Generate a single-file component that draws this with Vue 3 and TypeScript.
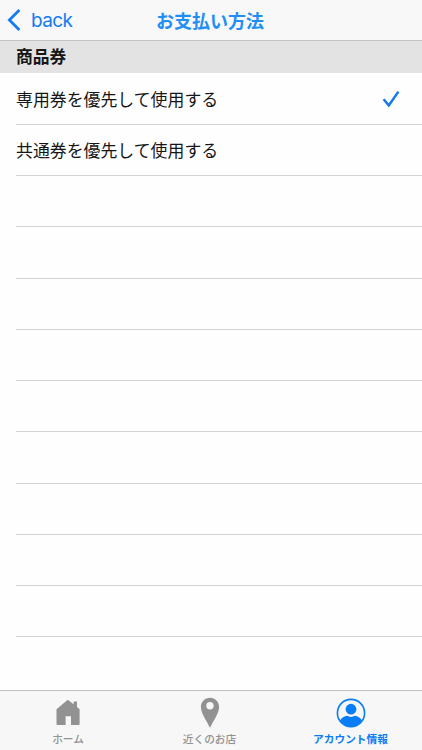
<script setup lang="ts">
import { ref } from 'vue'

const options: string[] = ['専用券を優先して使用する', '共通券を優先して使用する']
const selected = ref(0)
const emptyRows = 9
</script>

<template>
  <div class="screen">
    <header class="navbar">
      <button class="back" type="button">
        <svg width="14" height="24" viewBox="0 0 14 24"><path d="M12.4 2 2.4 12 12.4 22" fill="none" stroke="currentColor" stroke-width="2.8" /></svg>
        <span>back</span>
      </button>
      <h1 class="title">お支払い方法</h1>
      <span></span>
    </header>
    <h2 class="section">商品券</h2>
    <ul class="list">
      <li v-for="(option, i) in options" :key="option" class="row" @click="selected = i">
        <span class="label">{{ option }}</span>
        <svg v-if="selected === i" class="check" width="18" height="18" viewBox="0 0 18 18"><path d="M1.6 9.3 6.8 15.4 16.4 1.6" fill="none" stroke="currentColor" stroke-width="2.5" /></svg>
      </li>
      <li v-for="n in emptyRows" :key="n" class="row"></li>
    </ul>
    <nav class="tabbar">
      <div class="tab">
        <svg width="24" height="28" viewBox="0 0 24 28"><path d="M11.2 1.2Q12 .8 12.8 1.4L17.6 5.2V2.4H21V8L23.6 10.3V25Q23.6 26 22.6 26H15V17.2H9.6V26H1.5Q.5 26 .5 25V10.3Z" fill="currentColor" /></svg>
        <span>ホーム</span>
      </div>
      <div class="tab">
        <svg width="20" height="32" viewBox="0 0 20 32"><path fill-rule="evenodd" d="M10 .8C4.9.8.9 4.8.9 9.9.9 16 6.2 22.8 10 30.8 13.8 22.8 19.1 16 19.1 9.9 19.1 4.8 15.1.8 10 .8ZM10 5.1A3.7 3.7 0 1 1 10 12.5 3.7 3.7 0 0 1 10 5.1Z" fill="currentColor" /></svg>
        <span>近くのお店</span>
      </div>
      <div class="tab active">
        <svg width="30" height="30" viewBox="0 0 30 30">
          <defs><clipPath id="avatar"><circle cx="15" cy="15" r="13.2" /></clipPath></defs>
          <circle cx="15" cy="15" r="13.6" fill="none" stroke="currentColor" stroke-width="1.6" />
          <circle cx="15" cy="11.2" r="5.4" fill="currentColor" />
          <path clip-path="url(#avatar)" d="M3.6 23C5.5 19.4 8.5 18.3 11 17.8Q15 20 19 17.8C21.5 18.3 24.5 19.4 26.4 23L25 30H5Z" fill="currentColor" />
        </svg>
        <span>アカウント情報</span>
      </div>
    </nav>
  </div>
</template>

<style>
body { margin: 0; background: #fff; }
</style>

<style scoped>
.screen {
  width: 100%;
  height: 750px;
  display: flex;
  flex-direction: column;
  overflow: hidden;
  background: #fefefe;
  color: #161616;
  font-family: "Noto Sans CJK JP", sans-serif;
}
.navbar {
  box-sizing: border-box;
  flex: none;
  height: 41px;
  display: grid;
  grid-template-columns: 1fr auto 1fr;
  align-items: center;
  background: #f8f8f8;
  border-bottom: 1px solid #c3c3c3;
}
.back {
  display: flex;
  align-items: center;
  gap: 10px;
  margin: 0;
  padding: 0 0 0 7px;
  border: 0;
  background: none;
  color: #147cef;
  font: 19px/24px Inter, sans-serif;
  letter-spacing: -0.6px;
}
.back span { padding-top: 1px; }
.title {
  margin: 0;
  padding: 0 2px 1px 0;
  color: #218ef5;
  font-size: 18px;
  line-height: 24px;
  font-weight: 700;
}
.section {
  box-sizing: border-box;
  flex: none;
  height: 32px;
  margin: 0;
  padding-left: 16px;
  background: #e3e3e3;
  font-size: 16.8px;
  line-height: 31px;
  font-weight: 700;
}
.list {
  flex: 1;
  min-height: 0;
  margin: 0;
  padding: 0.5px 0 0 16px;
  overflow: hidden;
  list-style: none;
}
.row {
  box-sizing: border-box;
  height: 51.25px;
  display: flex;
  align-items: center;
  justify-content: space-between;
  padding-right: 22.5px;
  border-bottom: 1px solid #d2d2d2;
}
.label { font-size: 16.9px; line-height: 24px; }
.check { color: #147ae9; }
.tabbar {
  box-sizing: border-box;
  flex: none;
  height: 60px;
  display: grid;
  grid-template-columns: 136px 147px 135px;
  background: #f7f7f7;
  border-top: 1px solid #bdbdbd;
}
.tab {
  display: grid;
  grid-template-rows: 40px 16px;
  justify-items: center;
  align-content: start;
  color: #929292;
  font-size: 10.7px;
  line-height: 16px;
  font-weight: 500;
}
.tab svg { align-self: center; margin-top: 4px; }
.tab.active { color: #087df5; font-weight: 700; }
</style>
